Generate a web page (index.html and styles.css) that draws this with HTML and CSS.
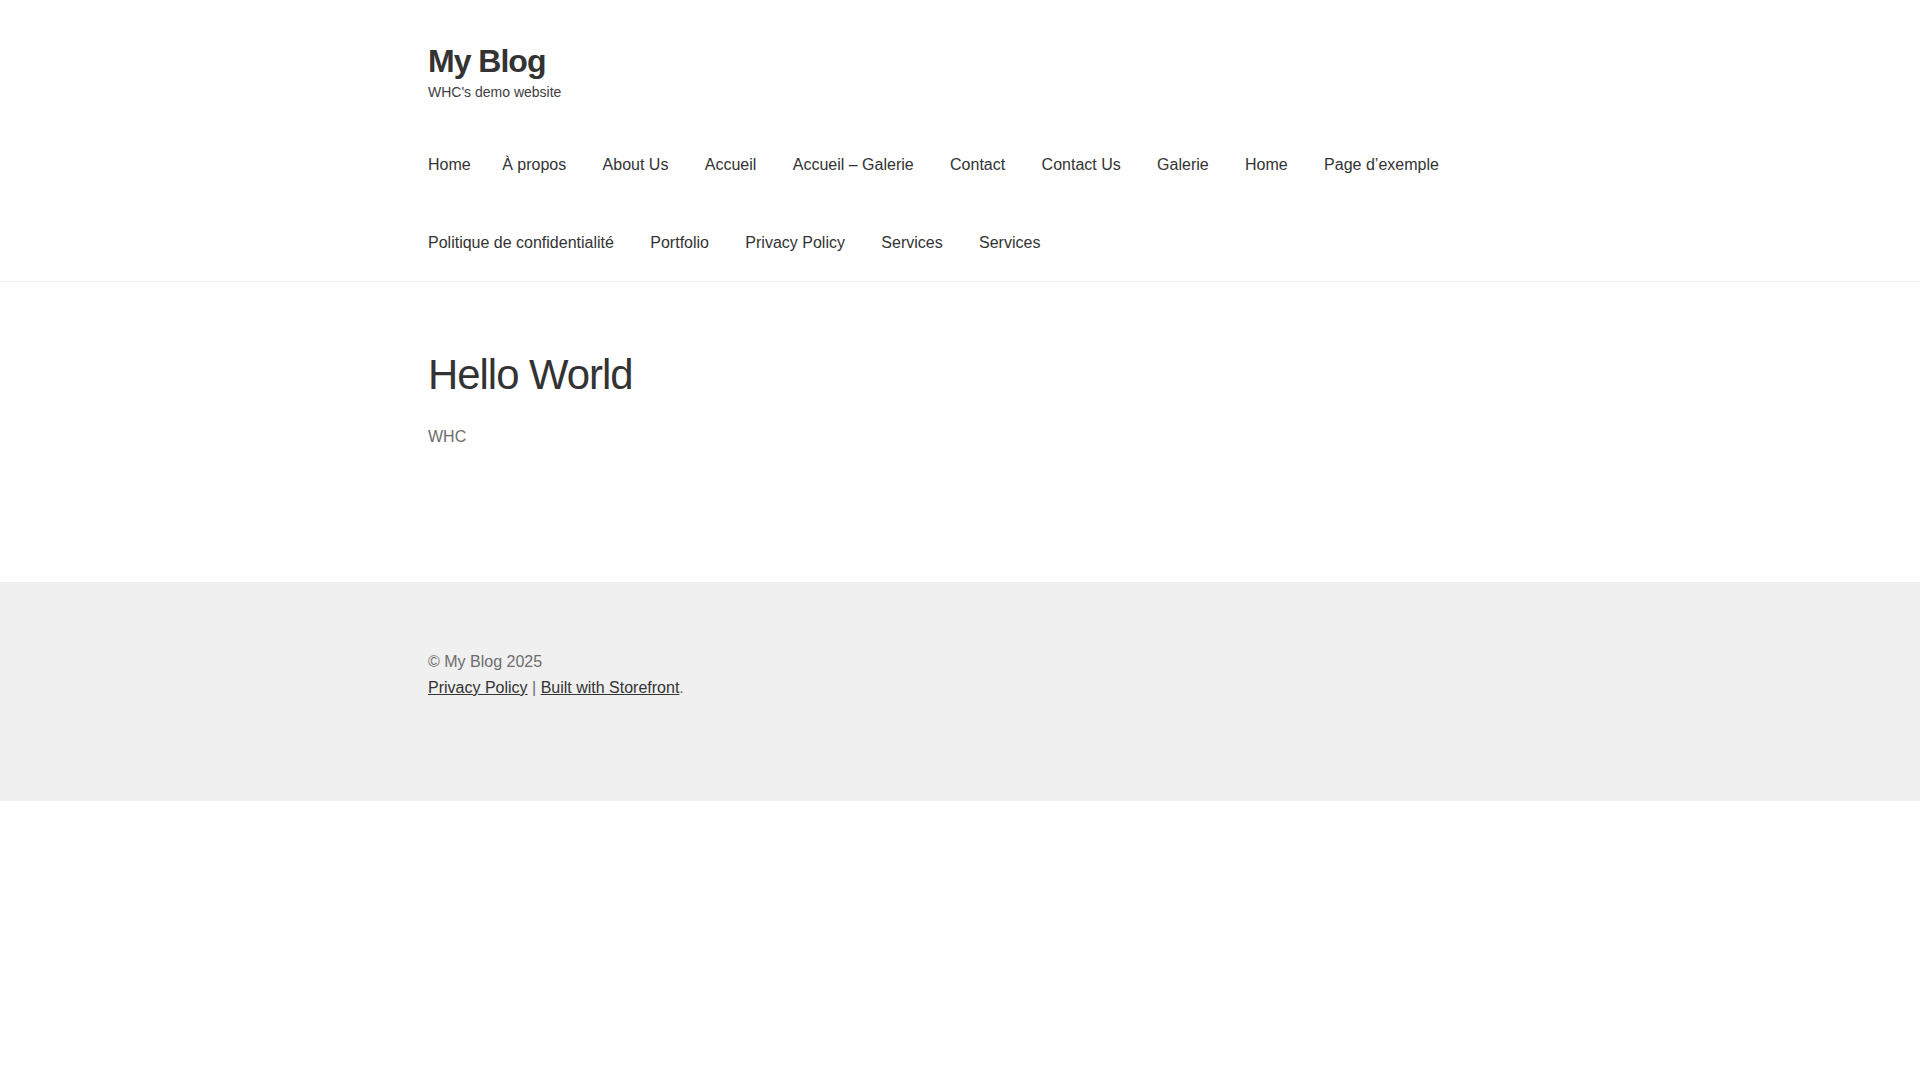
FILE: index.html
```html
<!DOCTYPE html>
<html lang="en">
<head>
<meta charset="utf-8">
<title>My Blog</title>
<link rel="stylesheet" href="styles.css">
</head>
<body>
<header class="site-header">
  <div class="col-full">
    <div class="site-branding">
      <h1 class="site-title"><a href="#">My Blog</a></h1>
      <p class="site-description">WHC's demo website</p>
    </div>
    <nav class="main-navigation">
      <ul class="menu">
        <li class="menu-first"><a href="#">Home</a></li>
        <li><a href="#">À propos</a></li>
        <li><a href="#">About Us</a></li>
        <li><a href="#">Accueil</a></li>
        <li><a href="#">Accueil – Galerie</a></li>
        <li><a href="#">Contact</a></li>
        <li><a href="#">Contact Us</a></li>
        <li><a href="#">Galerie</a></li>
        <li><a href="#">Home</a></li>
        <li><a href="#">Page d’exemple</a></li>
        <li><a href="#">Politique de confidentialité</a></li>
        <li><a href="#">Portfolio</a></li>
        <li><a href="#">Privacy Policy</a></li>
        <li><a href="#">Services</a></li>
        <li><a href="#">Services</a></li>
      </ul>
    </nav>
  </div>
</header>
<main class="site-content">
  <div class="col-full">
    <article class="entry">
      <h1 class="entry-title">Hello World</h1>
      <p class="entry-text">WHC</p>
    </article>
  </div>
</main>
<footer class="site-footer">
  <div class="col-full">
    <div class="site-info">
      <div>© My Blog 2025</div>
      <div><a href="#">Privacy Policy</a><span class="sep"> | </span><a href="#">Built with Storefront</a>.</div>
    </div>
  </div>
</footer>
</body>
</html>
```

FILE: styles.css
```css
html, body {
  margin: 0;
  padding: 0;
  background: #ffffff;
}
body {
  font-family: "Liberation Sans", Arial, sans-serif;
  font-size: 16px;
  line-height: 1.618;
  color: #6d6d6d;
}
a {
  color: #333333;
  text-decoration: none;
}
.col-full {
  max-width: 1064px;
  margin: 0 auto;
}
.site-header {
  padding-top: 41.9px;
  border-bottom: 1px solid #efefef;
  margin-bottom: 67.8px;
}
.site-branding {
  margin-bottom: 22.65px;
}
.site-title {
  margin: 0;
  font-size: 32px;
  line-height: 1.214;
  font-weight: 700;
  letter-spacing: -1px;
}
.site-title a {
  color: #333333;
}
.site-description {
  margin: 0;
  font-size: 14px;
  line-height: 1.618;
  color: #404040;
}
.menu {
  list-style: none;
  margin: 0 0 0 -18.2px;
  padding: 0;
  display: flex;
  flex-wrap: wrap;
}
.menu a {
  display: block;
  padding: 25.9px 18.2px;
  line-height: 25.9px;
  color: #333333;
}
.menu .menu-first {
  margin-right: -4.9px;
}
.site-content {
  padding-bottom: 132px;
}
.entry-title {
  margin: 0 0 22.65px;
  font-size: 41.89px;
  line-height: 1.214;
  font-weight: 300;
  letter-spacing: -1px;
  color: #333333;
}
.entry-text {
  margin: 0;
}
.site-footer {
  background: #f0f0f0;
  padding: 67.5px 0 100.5px;
}
.site-info a {
  text-decoration: underline;
}
.sep {
  color: #6d6d6d;
}
```
